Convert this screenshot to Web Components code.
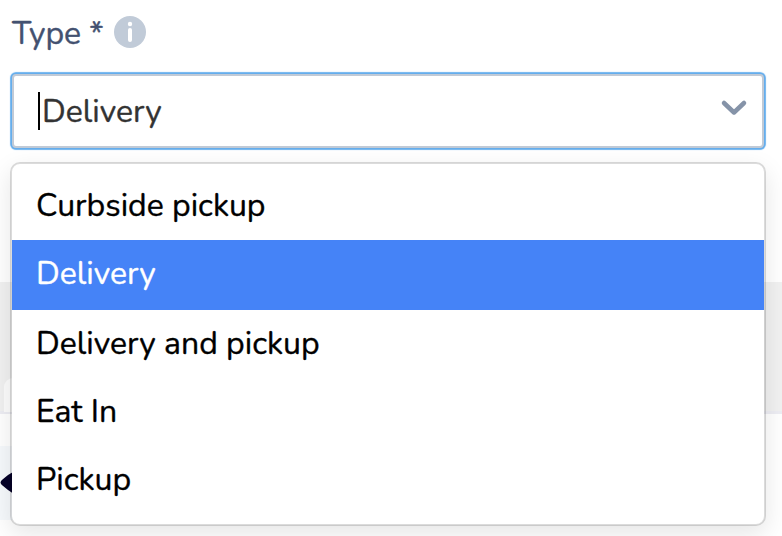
<!DOCTYPE html>
<html lang="en"><head><meta charset="utf-8"><title>Type</title>
<style>html,body{margin:0;width:782px;height:536px;overflow:hidden;background:#fff}body{font:32px/44px "Nunito","Noto Sans",sans-serif;-webkit-text-stroke:.35px currentColor}</style></head>
<body>
<order-type-page></order-type-page>
<script>
const define=(name,html)=>customElements.define(name,class extends HTMLElement{
  constructor(){super();this.attachShadow({mode:'open'}).innerHTML=html}
});
define('page-backdrop',`<style>
:host{position:absolute;inset:0;display:block;overflow:hidden}
div,svg{position:absolute}
.band{left:0;right:0;top:282px;height:132px;box-sizing:border-box;background:#f1f1f1;border-bottom:3px solid #ededf3}
.tab{left:4px;top:378px;width:40px;height:34px;background:#fcfcfc;border-radius:9px 0 0 0}
.pale{left:0;top:446px;width:40px;height:74px;background:#f6f9fc}
svg{left:0;top:469px}
</style><div class="band"></div><div class="tab"></div><div class="pale"></div>
<svg width="16" height="28"><path d="M16 1.5Q12 3.5 8 6L2.5 10.5Q-1.5 13.5 2.5 16.5L8 21Q12 24 16 26Z" fill="#050029"/></svg>`);
define('field-label',`<style>
:host{display:flex;align-items:center;gap:10px;height:44px;color:#435170}
span{white-space:pre;padding-top:4px}svg{display:block}
</style><span><slot></slot></span><svg width="32" height="32"><circle cx="16" cy="16" r="16" fill="#c1cbd8"/><circle cx="16" cy="8" r="2.2" fill="#fff"/><path d="M16 14v10" stroke="#fff" stroke-width="4" stroke-linecap="round"/></svg>`);
define('select-field',`<style>
:host{display:flex;align-items:center;box-sizing:border-box;height:74px;border:2px solid #c1cad6;border-radius:4px;background:#fff;box-shadow:0 0 0 1.5px #65adec,0 0 1px 2px #8bc3f3;padding:0 14px 0 24px;color:#333}
i{width:2px;height:38px;background:#000}span{flex:1;padding:2px 0 0 2px}
svg{display:block;margin-top:-7px}
</style><i></i><span><slot></slot></span><svg width="28" height="20"><path d="M4 5l10 9.5L24 5" fill="none" stroke="#8593a8" stroke-width="4.5" stroke-linecap="round" stroke-linejoin="round"/></svg>`);
define('option-list',`<style>
:host{display:flex;flex-direction:column;box-sizing:border-box;height:364px;padding:8px 0 10px;border:2px solid rgba(0,0,0,.14);border-radius:10px;background:#fff;background-clip:padding-box;box-shadow:0 8px 24px rgba(0,0,0,.1)}
</style><slot></slot>`);
define('list-option',`<style>
:host{display:flex;align-items:center;box-sizing:border-box;height:68px;padding:0 24px;color:#000}
:host([selected]){height:70px;background:#4583f7;color:#fff;padding-bottom:2px}
span{white-space:pre}
</style><span><slot></slot></span>`);
define('order-type-page',`<style>
:host{display:block;position:relative;width:782px;height:536px}
main{position:relative;display:flex;flex-direction:column;padding:10px 16px 0 10px}
field-label{padding-left:2px}select-field{margin:20px 2px 14px}
</style><page-backdrop></page-backdrop>
<main><field-label>Type *</field-label><select-field>Delivery</select-field>
<option-list><list-option>Curbside pickup</list-option><list-option selected>Delivery</list-option><list-option>Delivery and pickup</list-option><list-option>Eat In</list-option><list-option>Pickup</list-option></option-list></main>`);
</script></body></html>
